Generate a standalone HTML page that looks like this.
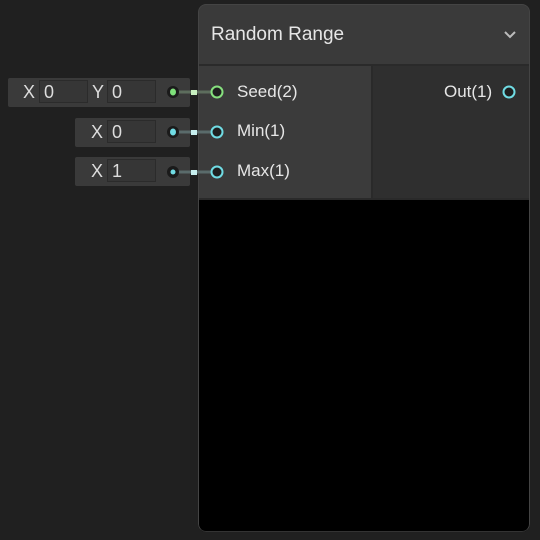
<!DOCTYPE html>
<html><head><style>
body{margin:0;width:540px;height:540px;background:#202020;position:relative;overflow:hidden;font-family:"Liberation Sans",sans-serif;color:#e0e0e0}
.a{position:absolute}
.box{position:absolute;background:#3a3a3a;border-radius:2px;height:29px}
.lbl{position:absolute;font-size:18px;top:4px;color:#ddd}
.fld{position:absolute;top:2px;height:23px;background:#363636;border:1px solid #2b2b2b;font-size:18px;line-height:23px;padding-left:4px;box-sizing:border-box;color:#ddd}
.txt{position:absolute;font-size:17px;color:#e6e6e6}
</style></head><body>
<div class="a" style="left:198px;top:4px;width:332px;height:528px;background:#000;border-radius:8px;overflow:hidden">
  <div class="a" style="left:0;top:0;width:332px;height:60px;background:#3a3a3a;border-bottom:2px solid #2a2a2a"></div>
  <div class="a" style="left:0;top:62px;width:173px;height:132px;background:#3b3b3b"></div>
  <div class="a" style="left:173px;top:62px;width:2px;height:132px;background:#2a2a2a"></div>
  <div class="a" style="left:175px;top:62px;width:157px;height:132px;background:#2f2f2f"></div>
  <div class="a" style="left:0;top:194px;width:332px;height:2px;background:#2a2a2a"></div>
  <div class="a" style="left:0;top:0;width:330px;height:526px;border:1px solid #444;border-radius:8px;border-bottom-color:#333"></div>
</div>
<div class="txt" style="left:211px;top:24px;font-size:19px">Random Range</div>
<svg class="a" style="left:500px;top:28px" width="20" height="14"><path d="M5 4l5 5 5-5" stroke="#bbb" stroke-width="2" fill="none"/></svg>
<div class="txt" style="left:237px;top:82px">Seed(2)</div>
<div class="txt" style="left:237px;top:121px">Min(1)</div>
<div class="txt" style="left:237px;top:161px">Max(1)</div>
<div class="txt" style="left:444px;top:82px">Out(1)</div>

<div class="box" style="left:8px;top:78px;width:182px">
  <div class="lbl" style="left:15px">X</div><div class="fld" style="left:31px;width:49px">0</div>
  <div class="lbl" style="left:84px">Y</div><div class="fld" style="left:99px;width:49px">0</div>
</div>
<div class="box" style="left:75px;top:118px;width:115px">
  <div class="lbl" style="left:16px">X</div><div class="fld" style="left:32px;width:49px">0</div>
</div>
<div class="box" style="left:75px;top:157px;width:115px">
  <div class="lbl" style="left:16px">X</div><div class="fld" style="left:32px;width:49px">1</div>
</div>

<svg class="a" style="left:0;top:0" width="540" height="540">
  <g>
    <line x1="178" y1="92" x2="211" y2="92" stroke="#5d6d5d" stroke-width="3"/>
    <rect x="191" y="90" width="6" height="5" fill="#c8f0c0"/>
    <circle cx="173" cy="92" r="6" fill="#1a1a1a"/><ellipse cx="173" cy="92" rx="3" ry="3.5" fill="#7ee07a"/>
    <circle cx="217" cy="92" r="5.5" fill="#1f1f1f" stroke="#86e07e" stroke-width="2"/>
  </g>
  <g>
    <line x1="178" y1="132" x2="211" y2="132" stroke="#5a6b6b" stroke-width="3"/>
    <rect x="191" y="130" width="6" height="5" fill="#c8f0f0"/>
    <circle cx="173" cy="132" r="6" fill="#1a1a1a"/><ellipse cx="173" cy="132" rx="3" ry="3.5" fill="#70dce4"/>
    <circle cx="217" cy="132" r="5.5" fill="#1f1f1f" stroke="#70dce4" stroke-width="2"/>
  </g>
  <g>
    <line x1="178" y1="172" x2="211" y2="172" stroke="#5a6b6b" stroke-width="3"/>
    <rect x="191" y="170" width="6" height="5" fill="#c8f0f0"/>
    <circle cx="173" cy="172" r="6" fill="#1a1a1a"/><circle cx="173" cy="172" r="2.5" fill="#70dce4"/>
    <circle cx="217" cy="172" r="5.5" fill="#1f1f1f" stroke="#70dce4" stroke-width="2"/>
  </g>
  <circle cx="509" cy="92" r="5.5" fill="#1f1f1f" stroke="#70dce4" stroke-width="2"/>
</svg>
</body></html>
